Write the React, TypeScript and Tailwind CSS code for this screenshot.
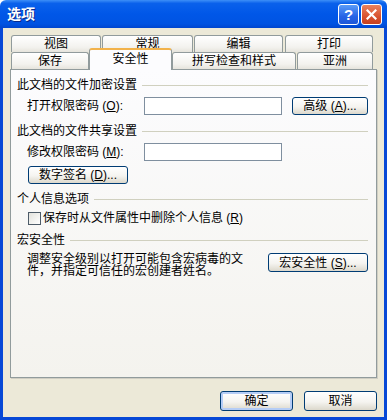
import React from 'react';

const font = "font-[family-name:'Liberation_Sans','Noto_Sans_CJK_SC',sans-serif]";

const btn =
  'flex items-center justify-center rounded-[3px] border border-[#003c74] bg-[linear-gradient(to_bottom,#ffffff,#f5f4f0_55%,#dcd8cc)] text-[12px] leading-none text-black';

function Key({ k }: { k: string }) {
  return (
    <>
      (<span className="underline underline-offset-1">{k}</span>)
    </>
  );
}

function Tab({ label, w, ml = 0, active = false }: { label: string; w: number; ml?: number; active?: boolean }) {
  if (active) {
    return (
      <div
        style={{ width: w }}
        className="relative top-px z-10 flex h-[22px] shrink-0 items-center justify-center rounded-t-[3px] border-x border-t-2 border-x-[#919b9c] border-t-[#f2b24a] bg-[#fcfcfe] pb-[2px] text-[12px] leading-none"
      >
        {label}
      </div>
    );
  }
  return (
    <div
      style={{ width: w, marginLeft: ml }}
      className="flex h-[17px] shrink-0 items-center justify-center rounded-t-[3px] border border-b-0 border-[#919b9c] bg-[linear-gradient(to_bottom,#ffffff,#f3f2ee_70%,#e6e4dc)] text-[12px] leading-none"
    >
      {label}
    </div>
  );
}

function Header({ text, mt }: { text: string; mt: number }) {
  return (
    <div style={{ marginTop: mt }} className="flex h-[16px] items-center gap-[5px]">
      <span className="text-[12px] leading-none">{text}</span>
      <div className="h-px flex-1 bg-[#d0d0bf]" />
    </div>
  );
}

export default function App() {
  return (
    <div className={`${font} flex h-[420px] w-[387px] flex-col overflow-hidden text-black`}>
      {/* Title bar */}
      <div className="flex h-[28px] shrink-0 items-center justify-between rounded-t-[6px] bg-[linear-gradient(to_bottom,#3d8ff7_0%,#0a61eb_12%,#0057e8_50%,#0053e2_85%,#0046cf_100%)] pl-[7px] pr-[5px]">
        <span className="text-[14px] font-bold leading-none text-white [text-shadow:1px_1px_0_#0a2a8a]">选项</span>
        <div className="flex gap-[2px]">
          <div className="flex h-[21px] w-[21px] items-center justify-center rounded-[3px] border border-white bg-[linear-gradient(to_bottom,#5a9cf8,#2664e6_60%,#1e57d8)] text-[15px] font-bold leading-none text-white">
            ?
          </div>
          <div className="flex h-[21px] w-[21px] items-center justify-center rounded-[3px] border border-white bg-[linear-gradient(to_bottom,#e9825f,#d9532f_60%,#c6401f)]">
            <svg width="11" height="11" viewBox="0 0 11 11">
              <path d="M1.5 1.5 L9.5 9.5 M9.5 1.5 L1.5 9.5" stroke="white" strokeWidth="2.2" strokeLinecap="square" />
            </svg>
          </div>
        </div>
      </div>

      {/* Body */}
      <div className="flex flex-1 flex-col border-x-[3px] border-b-[3px] border-[#0748d6] bg-[#ece9d8]">
        {/* Tabs */}
        <div className="mt-[7px] ml-[8px] flex flex-col">
          <div className="flex">
            <Tab label="视图" w={90} />
            <Tab label="常规" w={91} ml={1} />
            <Tab label="编辑" w={89} ml={1} />
            <Tab label="打印" w={88} ml={2} />
          </div>
          <div className="flex h-[17px] items-end">
            <Tab label="保存" w={78} />
            <Tab label="安全性" w={83} active />
            <Tab label="拼写检查和样式" w={124} />
            <Tab label="亚洲" w={76} ml={1} />
          </div>
        </div>

        {/* Panel */}
        <div className="ml-[7px] flex h-[309px] w-[367px] flex-col border border-[#919b9c] bg-[linear-gradient(to_bottom,#fcfcfe,#f4f3ee)] pl-[6px] pr-[8px] shadow-[1px_1px_0_#d0cec3] text-[12px] leading-none">
          <Header text="此文档的文件加密设置" mt={7} />
          <div className="mt-[4px] flex h-[18px] items-center pl-[10px]">
            <span className="w-[117px]">
              打开权限密码 <Key k="O" />:
            </span>
            <div className="h-[18px] w-[138px] border border-[#7f8f9f] bg-white" />
            <div className={`${btn} ml-[10px] h-[18px] w-[76px]`}>
              高级 <Key k="A" />...
            </div>
          </div>

          <Header text="此文档的文件共享设置" mt={8} />
          <div className="mt-[4px] flex h-[18px] items-center pl-[10px]">
            <span className="w-[117px]">
              修改权限密码 <Key k="M" />:
            </span>
            <div className="h-[18px] w-[138px] border border-[#7f8f9f] bg-white" />
          </div>
          <div className="mt-[5px] pl-[11px]">
            <div className={`${btn} h-[18px] w-[100px]`}>
              数字签名 <Key k="D" />...
            </div>
          </div>

          <Header text="个人信息选项" mt={7} />
          <div className="mt-[3px] flex h-[16px] items-center gap-[2px] pl-[11px]">
            <div className="h-[13px] w-[13px] border border-[#4d5b68] bg-[linear-gradient(135deg,#e2e2dc,#ffffff)]" />
            <span>
              保存时从文件属性中删除个人信息 <Key k="R" />
            </span>
          </div>

          <Header text="宏安全性" mt={6} />
          <div className="mt-[5px] flex items-start justify-between pl-[10px]">
            <p className="w-[220px] leading-[12px]">
              调整安全级别以打开可能包含宏病毒的文件，并指定可信任的宏创建者姓名。
            </p>
            <div className={`${btn} h-[19px] w-[100px]`}>
              宏安全性 <Key k="S" />...
            </div>
          </div>
        </div>

        {/* Footer buttons */}
        <div className="mt-[13px] flex justify-end gap-[11px] pr-[7px]">
          <div className={`${btn} h-[20px] w-[73px] shadow-[inset_0_0_0_2px_#b5cdf6]`}>确定</div>
          <div className={`${btn} h-[20px] w-[73px]`}>取消</div>
        </div>
      </div>
    </div>
  );
}
